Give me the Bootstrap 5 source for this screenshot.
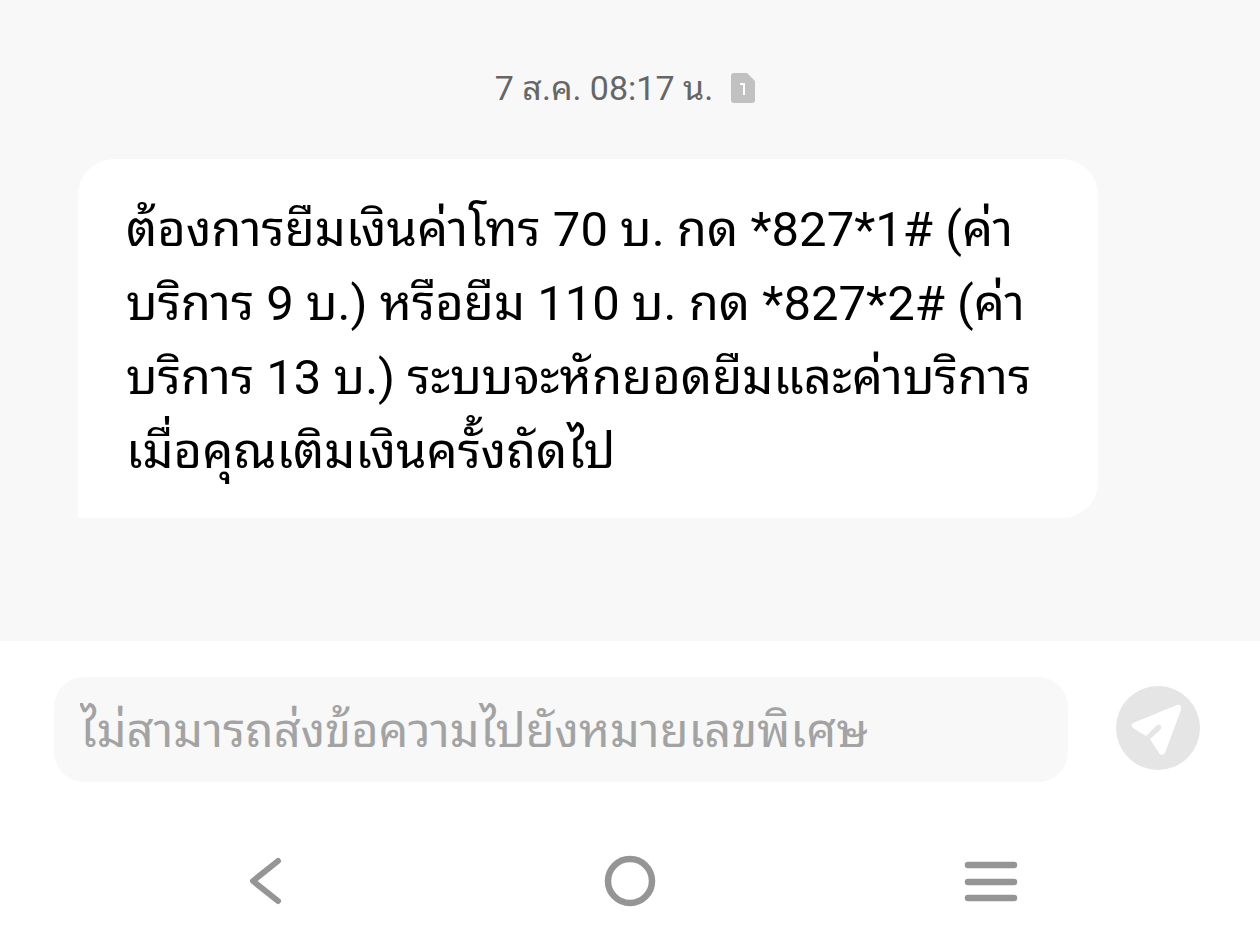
<!DOCTYPE html>
<html lang="th">
<head>
<meta charset="utf-8">
<meta name="viewport" content="width=device-width, initial-scale=1">
<title>ข้อความ</title>
<link href="https://cdn.jsdelivr.net/npm/bootstrap@5.3.0/dist/css/bootstrap.min.css" rel="stylesheet">
<style>
body{font-family:Roboto,"Noto Sans Thai Looped","Noto Sans",sans-serif;background:#fff}
.thread{background:#f8f8f8;padding:64px 78px 48px}
.stamp{font-size:34px;line-height:48px;color:#666;gap:18px;padding-right:10px}
.bubble{margin-top:47px;max-width:1020px;border-radius:36px 36px 36px 0;padding:34px 48px 29px;font-size:49px;line-height:74px;color:#000}
.composer{padding:36px 60px 36px 54px;gap:48px}
.composer .form-control,.composer .form-control:focus{height:105px;border-radius:30px;background:#f8f8f8;padding:2px 26px 0;font-size:47px}
.composer .form-control::placeholder{color:#a3a3a3}
.send{width:84px;height:84px;margin-bottom:3px}
.system-nav{height:126px;padding:0 7%}
.system-nav .btn{width:60px;height:60px}
</style>
</head>
<body class="min-vh-100 d-flex flex-column">
<main class="thread flex-grow-1">
  <div class="stamp d-flex justify-content-center align-items-center">
    <time>7 ส.ค. 08:17 น.</time>
    <svg class="flex-shrink-0" width="24" height="30" viewBox="0 0 24 30" role="img" aria-label="SIM 1">
      <path d="M3 0h13l8 8v19a3 3 0 0 1-3 3H3a3 3 0 0 1-3-3V3a3 3 0 0 1 3-3z" fill="#c1c1c1"/>
      <path d="M9 11h4v11" fill="none" stroke="#fff" stroke-width="2"/>
    </svg>
  </div>
  <p class="bubble bg-white mb-0">ต้องการยืมเงินค่าโทร 70 บ. กด *827*1# (ค่า<br>บริการ 9 บ.) หรือยืม 110 บ. กด *827*2# (ค่า<br>บริการ 13 บ.) ระบบจะหักยอดยืมและค่าบริการ<br>เมื่อคุณเติมเงินครั้งถัดไป</p>
</main>
<form class="composer d-flex align-items-center">
  <input type="text" class="form-control border-0 flex-grow-1 shadow-none" aria-label="ข้อความ" placeholder="ไม่สามารถส่งข้อความไปยังหมายเลขพิเศษ">
  <button type="button" class="send btn border-0 p-0 rounded-circle flex-shrink-0 d-flex" aria-label="ส่ง">
    <svg width="84" height="84" viewBox="0 0 84 84">
      <circle cx="42" cy="42" r="42" fill="#e5e5e5"/>
      <path d="M17 37 61 19Q66 18 65 24L49 67Q46 71 43 67L34 53 45 43Q46 38 41 39L30 50 17 42Q14 39 17 37z" fill="#fff"/>
    </svg>
  </button>
</form>
<nav class="system-nav d-flex justify-content-around align-items-center" aria-label="ระบบ">
  <button type="button" class="btn border-0 p-0" aria-label="ย้อนกลับ">
    <svg width="60" height="60" viewBox="0 0 60 60"><path d="M39 10 14 30 39 50" fill="none" stroke="#959595" stroke-width="6" stroke-linecap="round" stroke-linejoin="round"/></svg>
  </button>
  <button type="button" class="btn border-0 p-0" aria-label="หน้าหลัก">
    <svg width="60" height="60" viewBox="0 0 60 60"><circle cx="30" cy="30" r="22" fill="none" stroke="#959595" stroke-width="6.5"/></svg>
  </button>
  <button type="button" class="btn border-0 p-0" aria-label="แอปล่าสุด">
    <svg width="60" height="60" viewBox="0 0 60 60"><path d="M7 14h46M7 31h46M7 47h46" fill="none" stroke="#959595" stroke-width="6.5" stroke-linecap="round"/></svg>
  </button>
</nav>
<script src="https://cdn.jsdelivr.net/npm/bootstrap@5.3.0/dist/js/bootstrap.bundle.min.js"></script>
</body>
</html>
